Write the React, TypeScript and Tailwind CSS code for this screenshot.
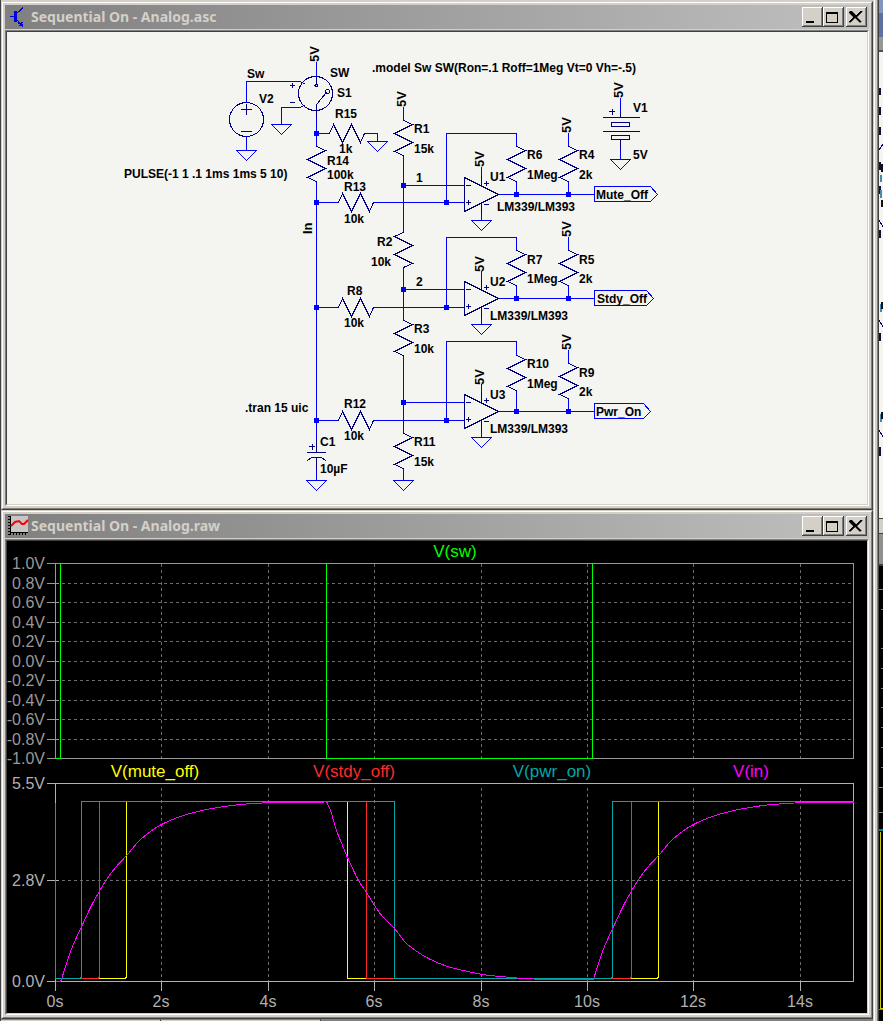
import type { ReactNode } from "react";

const SYMBOL = "#000080";
const WIRE = "#0000ff";

/* ---------- Window chrome ---------- */

function CaptionButton({ label, children }: { label: string; children: ReactNode }) {
  return (
    <button
      type="button"
      aria-label={label}
      className="h-5 w-[21px] bg-[#d4d0c8] shadow-[inset_-1px_-1px_#404040,inset_1px_1px_#ffffff,inset_-2px_-2px_#808080]"
    >
      <svg viewBox="0 0 21 20" className="block h-5 w-[21px]" shapeRendering="crispEdges">
        {children}
      </svg>
    </button>
  );
}

function Window({ title, icon, children }: { title: string; icon: ReactNode; children: ReactNode }) {
  return (
    <section className="border border-t-[#d4d0c8] border-r-[#404040] border-b-[#404040] border-l-[#d4d0c8] bg-[#d4d0c8]">
      <div className="border border-t-white border-r-[#808080] border-b-[#808080] border-l-white p-[2px]">
        <header className="mb-px flex h-6 items-center bg-linear-to-r from-[#808080] to-[#c0c0c0] pr-[2px] pl-[3px]">
          {icon}
          <h2 className="ml-[2px] flex-1 truncate font-['Noto_Sans',sans-serif] text-[14px] leading-6 font-bold text-[#d4d0c8]">
            {title}
          </h2>
          <CaptionButton label="Minimize">
            <path d="M4 14h8v2h-8z" />
          </CaptionButton>
          <CaptionButton label="Maximize">
            <path d="M3 5h12v11h-12zM4 7v8h10v-8z" fillRule="evenodd" />
          </CaptionButton>
          <div className="ml-[2px] flex">
            <CaptionButton label="Close">
              <path
                d="M4 4h2v1h1v1h1v1h1v1h2v-1h1v-1h1v-1h1v-1h2v1h-1v1h-1v1h-1v1h-1v1h-1v2h1v1h1v1h1v1h1v1h-2v-1h-1v-1h-1v-1h-1v-1h-2v1h-1v1h-1v1h-1v1h-2v-1h1v-1h1v-1h1v-1h1v-2h-1v-1h-1v-1h-1v-1h-1z"
                stroke="#000"
                strokeWidth="0.400"
              />
            </CaptionButton>
          </div>
        </header>
        <div className="border border-t-[#808080] border-r-white border-b-white border-l-[#808080]">
          <div className="border border-t-[#404040] border-r-[#d4d0c8] border-b-[#d4d0c8] border-l-[#404040]">
            {children}
          </div>
        </div>
      </div>
    </section>
  );
}

function SchematicIcon() {
  return (
    <svg viewBox="0 0 21 22" className="h-[22px] w-[21px]" shapeRendering="crispEdges" fill="none" stroke="#0000e0">
      <path d="M2 10.500h5" />
      <path d="M7.500 5v11" strokeWidth="3" />
      <path d="M9 7L15 1.500M9 14L15 20" strokeWidth="1.300" />
      <path d="M10 16l5 4M14 16l-2 4" strokeWidth="2" />
    </svg>
  );
}

function WaveformIcon() {
  return (
    <svg viewBox="0 0 21 22" className="h-[22px] w-[21px]" shapeRendering="crispEdges" fill="none">
      <path d="M3 1h17v16h-17z" fill="#c6c6c6" />
      <path d="M2.500 1v17M2 17.500h18" stroke="#000" />
      <path d="M1 1v19" stroke="#000" strokeWidth="2" strokeDasharray="1 2" />
      <path d="M2 19h18" stroke="#000" strokeWidth="2" strokeDasharray="1 2" />
      <path d="M3 11l4-4 4-1 3 3h2l4-4" stroke="#f00" strokeWidth="2" shapeRendering="auto" />
    </svg>
  );
}

/* ---------- Schematic ---------- */

type Point = [number, number];

const ZIGZAG: Point[] = [[0, 0], [4, 9], [13, -9], [22, 9], [31, -9], [35, 0]];

function Resistor({ x, y, horizontal, flip }: { x: number; y: number; horizontal?: boolean; flip?: boolean }) {
  const points = ZIGZAG.map(([along, across]) => {
    const side = flip ? -across : across;
    return horizontal ? `${x + along},${y - side}` : `${x + side},${y + along}`;
  }).join(" ");
  return <polyline points={points} stroke={SYMBOL} />;
}

function Ground({ x, y }: { x: number; y: number }) {
  return <path d={`M${x - 10} ${y}h20l-10 10z`} />;
}

function Junction({ x, y }: { x: number; y: number }) {
  return <rect x={x - 2.5} y={y - 2.5} width="5" height="5" fill={WIRE} stroke="none" />;
}

function Comparator({ y, ground }: { y: number; ground: number }) {
  return (
    <g>
      <g stroke={SYMBOL}>
        <path d={`M464 ${y - 17}v34l34 -17z`} />
        <path d={`M466 ${y - 9}h4M466 ${y + 8}h4M468 ${y + 6}v4`} />
        <path d={`M481 ${y - 20}v11M481 ${y + 9}v11`} />
        <path d={`M484 ${y - 11}h4M486 ${y - 13}v4M484 ${y + 10}h4`} />
      </g>
      <path d={`M481 ${y - 27}v7M481 ${y + 20}V${ground}`} />
      <Ground x={481} y={ground} />
    </g>
  );
}

function Flag({ y, bodyEnd }: { y: number; bodyEnd: number }) {
  return <path d={`M594 ${y - 8}H${bodyEnd}l7 8l-7 7H594z`} />;
}

const RESISTORS = [
  { x: 329, y: 133, horizontal: true },
  { x: 338, y: 202, horizontal: true },
  { x: 338, y: 307, horizontal: true },
  { x: 338, y: 420, horizontal: true },
  { x: 316, y: 146 },
  { x: 403, y: 120 },
  { x: 403, y: 232, flip: true },
  { x: 403, y: 320 },
  { x: 403, y: 433 },
  { x: 516, y: 146 },
  { x: 568, y: 146 },
  { x: 516, y: 250 },
  { x: 568, y: 250 },
  { x: 516, y: 355 },
  { x: 568, y: 363 },
];

const GROUNDS: Point[] = [[246, 150], [281, 124], [377, 141], [620, 159], [403, 480], [316, 480]];

const JUNCTIONS: Point[] = [
  [316, 133], [316, 202], [316, 307], [316, 420],
  [403, 185], [403, 289], [403, 402],
  [446, 202], [446, 307], [446, 420],
  [516, 194], [568, 194], [516, 298], [568, 298], [516, 411], [568, 411],
];

const WIRES = [
  "M246 102V81H300M246 136V150M281 124V107H300M316 62V76M316 118V146",
  "M316 133H329M364 133H377V141M316 181V438M316 202H338M373 202H464",
  "M316 307H338M373 307H464M316 420H338M373 420H464M316 470V480",
  "M403 107V120M403 155V232M403 267V320M403 355V433M403 468V480",
  "M403 185H464M403 289H464M403 402H464",
  "M446 202V133H516V146M516 181V194M568 133V146M568 181V194M498 194H594",
  "M446 307V237H516V250M516 285V298M568 237V250M568 285V298M498 298H594",
  "M446 420V341H516V355M516 390V411M568 350V363M568 398V411M498 411H594",
  "M620 98V110M620 149V159",
];

const LABELS: [number, number, string][] = [
  [247, 78, "Sw"], [330, 77, "SW"], [337, 97, "S1"], [259, 103, "V2"],
  [335, 118, "R15"], [339, 153, "1k"], [327, 165, "R14"], [327, 179, "100k"],
  [344, 191, "R13"], [344, 223, "10k"],
  [124, 178, "PULSE(-1 1 .1 1ms 1ms 5 10)"],
  [372, 72, ".model Sw SW(Ron=.1 Roff=1Meg Vt=0 Vh=-.5)"],
  [414, 133, "R1"], [414, 153, "15k"], [416, 182, "1"],
  [377, 246, "R2"], [371, 266, "10k"], [416, 286, "2"],
  [414, 333, "R3"], [414, 353, "10k"],
  [347, 295, "R8"], [344, 327, "10k"], [344, 408, "R12"], [344, 440, "10k"],
  [320, 446, "C1"], [320, 473, "10µF"], [414, 446, "R11"], [414, 466, "15k"],
  [245, 412, ".tran 15 uic"],
  [490, 181, "U1"], [497, 211, "LM339/LM393"], [527, 159, "R6"], [527, 179, "1Meg"],
  [579, 159, "R4"], [579, 179, "2k"], [596, 199, "Mute_Off"],
  [633, 112, "V1"], [633, 159, "5V"],
  [490, 286, "U2"], [490, 320, "LM339/LM393"], [527, 264, "R7"], [527, 283, "1Meg"],
  [579, 264, "R5"], [579, 283, "2k"], [597, 303, "Stdy_Off"],
  [490, 399, "U3"], [490, 433, "LM339/LM393"], [527, 368, "R10"], [527, 388, "1Meg"],
  [579, 377, "R9"], [579, 396, "2k"], [596, 416, "Pwr_On"],
];

const UPRIGHT_LABELS: [number, number, string][] = [
  [319, 62, "5V"], [406, 107, "5V"], [312, 234, "In"], [623, 98, "5V"],
  [484, 167, "5V"], [484, 272, "5V"], [484, 385, "5V"],
  [571, 133, "5V"], [571, 237, "5V"], [571, 350, "5V"],
];

function Schematic() {
  return (
    <svg
      viewBox="7 32 860 472"
      className="block h-auto w-full bg-[#f4f4f0] font-['Liberation_Sans',Arial,sans-serif] text-[12px] font-bold"
      role="img"
      aria-label="Sequential power-on circuit"
    >
      <g
        transform="translate(0.5 0.5)"
        fill="none"
        stroke={WIRE}
        strokeLinecap="square"
        shapeRendering="crispEdges"
      >
        <g stroke={SYMBOL}>
          <circle cx="246" cy="119" r="17" />
          <path d="M241 109h10M246 104v10M241 131h10" />
          <circle cx="315" cy="93" r="17" />
          <circle cx="316" cy="85" r="1.500" />
          <circle cx="327" cy="91" r="2" />
          <path d="M316 76V84M316 118V104L326 92M299 81l5 2M299 107l5 -2" />
          <path d="M290 85h4M292 83v4M290 102h4" />
          <path d="M603 117h36M603 131h36M611 122h18v4h-18zM611 135h18v4h-18zM620 109v8M620 139v11" />
          <path d="M609 111h5M612 109v5" />
          <path d="M316 438v14M316 457v14M307 452h18M307 460l4 -3h10l4 3" />
          <path d="M309 446h5M312 444v5" />
        </g>
        {WIRES.map((d) => (
          <path key={d} d={d} />
        ))}
        {RESISTORS.map((r) => (
          <Resistor key={`${r.x}-${r.y}`} {...r} />
        ))}
        {GROUNDS.map(([x, y]) => (
          <Ground key={`${x}-${y}`} x={x} y={y} />
        ))}
        <Comparator y={194} ground={220} />
        <Comparator y={298} ground={324} />
        <Comparator y={411} ground={437} />
        <Flag y={194} bodyEnd={650} />
        <Flag y={298} bodyEnd={646} />
        <Flag y={411} bodyEnd={643} />
        {JUNCTIONS.map(([x, y]) => (
          <Junction key={`${x}-${y}`} x={x} y={y} />
        ))}
      </g>
      {LABELS.map(([x, y, text]) => (
        <text key={`${x}-${y}`} x={x} y={y}>
          {text}
        </text>
      ))}
      {UPRIGHT_LABELS.map(([x, y, text]) => (
        <text key={`${x}-${y}`} transform={`translate(${x} ${y}) rotate(-90)`} className="text-[13px]">
          {text}
        </text>
      ))}
    </svg>
  );
}

/* ---------- Waveforms ---------- */

const SWITCH_ROWS = [563, 583, 602, 622, 641, 661, 680, 700, 719, 739, 758];
const SWITCH_LABELS = ["1.0V", "0.8V", "0.6V", "0.4V", "0.2V", "0.0V", "-0.2V", "-0.4V", "-0.6V", "-0.8V", "-1.0V"];
const TIME_COLUMNS = [55, 161, 268, 374, 481, 587, 693, 800];
const INNER_COLUMNS = TIME_COLUMNS.slice(1);

const CHARGE: Point[] = [
  [61, 979], [66, 963], [72, 946], [82, 924], [92, 903], [100, 889], [106, 879], [115, 867], [127, 854],
  [138, 841], [150, 831], [161, 824], [177, 817], [197, 811], [217, 807], [240, 804], [273, 802], [300, 802], [321, 802],
];
const DISCHARGE: Point[] = [
  [326, 801], [330, 810], [336, 830], [342, 845], [347, 857], [358, 880], [366, 892], [374, 905], [382, 916],
  [394, 928], [405, 942], [415, 950], [428, 958], [447, 966], [463, 970], [482, 974], [500, 976], [523, 978],
  [550, 979], [592, 979],
];
const RECHARGE: Point[] = CHARGE.map(([x, y]) => [x + 532, y]);

function smooth(points: Point[]) {
  let d = `${points[0][0]} ${points[0][1]}`;
  for (let i = 0; i < points.length - 1; i++) {
    const before = points[Math.max(i - 1, 0)];
    const from = points[i];
    const to = points[i + 1];
    const after = points[Math.min(i + 2, points.length - 1)];
    d += ` C${from[0] + (to[0] - before[0]) / 6} ${from[1] + (to[1] - before[1]) / 6}`;
    d += ` ${to[0] - (after[0] - from[0]) / 6} ${to[1] - (after[1] - from[1]) / 6} ${to[0]} ${to[1]}`;
  }
  return d;
}

const V_IN = `M55 981H60L${smooth(CHARGE)} L${smooth(DISCHARGE)} L${smooth(RECHARGE)}`;

function logicTrace(rise: number, fall: number, riseAgain: number) {
  return `M55 802V978H${rise - 1}L${rise} 976V801H${fall}V978H${riseAgain - 1}L${riseAgain} 976V801H853`;
}

const LEGENDS: [number, number, string, string][] = [
  [455, 557, "V(sw)", "#00ff00"],
  [155, 777, "V(mute_off)", "#ffff00"],
  [354, 777, "V(stdy_off)", "#ff2a2a"],
  [552, 777, "V(pwr_on)", "#00a8a8"],
  [751, 777, "V(in)", "#ff00ff"],
];

function Waveforms() {
  return (
    <svg
      viewBox="7 541 860 472"
      className="block h-auto w-full bg-black font-['Liberation_Sans',Arial,sans-serif] text-[16px]"
      role="img"
      aria-label="Simulation waveforms"
    >
      <g transform="translate(0.5 0.5)" fill="none" shapeRendering="crispEdges">
        <g stroke="#6c6c6c" strokeDasharray="3 3">
          {SWITCH_ROWS.slice(1, -1).map((y) => (
            <path key={y} d={`M55 ${y}H850`} />
          ))}
          {INNER_COLUMNS.map((x) => (
            <path key={x} d={`M${x} 563V758M${x} 787V981`} />
          ))}
          <path d="M55 880H850" />
        </g>
        <g stroke="#989898">
          <rect x="55" y="563" width="798" height="195" />
          {SWITCH_ROWS.map((y) => (
            <path key={y} d={`M46 ${y}H58`} />
          ))}
        </g>
        <g stroke="#b0b0b0">
          <rect x="55" y="783" width="798" height="198" />
          <path d="M46 783H55M46 880H58M46 981H55" />
          {TIME_COLUMNS.map((x) => (
            <path key={x} d={`M${x} 981V990`} />
          ))}
        </g>
        <path d="M55 661V758H60V563H326V758H592V563H853" stroke="#00ff00" />
        <path d={logicTrace(126, 347, 658)} stroke="#ffff00" />
        <path d={logicTrace(99, 366, 631)} stroke="#ff2a2a" />
        <path d={logicTrace(81, 394, 612)} stroke="#00a8a8" />
        <path d={V_IN} stroke="#ff00ff" />
      </g>
      <g fill="#989898" textAnchor="end">
        {SWITCH_ROWS.map((y, i) => (
          <text key={y} x="45" y={y + 6}>
            {SWITCH_LABELS[i]}
          </text>
        ))}
      </g>
      <g fill="#b0b0b0" textAnchor="end">
        <text x="45" y="789">5.5V</text>
        <text x="45" y="886">2.8V</text>
        <text x="45" y="987">0.0V</text>
      </g>
      <g fill="#b0b0b0" textAnchor="middle">
        {TIME_COLUMNS.map((x, i) => (
          <text key={x} x={x} y="1007">
            {`${i * 2}s`}
          </text>
        ))}
      </g>
      <g className="text-[17px]" textAnchor="middle">
        {LEGENDS.map(([x, y, text, color]) => (
          <text key={text} x={x} y={y} fill={color}>
            {text}
          </text>
        ))}
      </g>
    </svg>
  );
}

/* ---------- Edge of the neighbouring window ---------- */

function NeighbourSchematic() {
  return (
    <svg viewBox="0 0 4 466" className="block h-[466px] w-1 bg-[#f4f4f0]" shapeRendering="crispEdges" fill="none">
      <path d="M1 36v7M1 55v8M1 75v8M1 110v8M1 134v8M1 178v8M1 281v8M1 395v9" stroke="#101030" strokeWidth="2" />
      <path d="M2 123v7M2 138v8M2 252v8M2 362v8" stroke="#4a8ab0" strokeWidth="2" />
      <path d="M0 98l4-6M0 168l4 7M0 268l4 7M0 378l4 7" stroke={SYMBOL} />
      <path d="M3 112v8M3 148v7M3 250v7M3 360v7" stroke="#101010" strokeWidth="2" />
    </svg>
  );
}

function NeighbourWaveforms() {
  return (
    <svg viewBox="0 0 4 453" className="block h-[453px] w-1" shapeRendering="crispEdges" fill="none">
      <path
        d="M0 23h4M2 43h2M2 82h2M2 102h2M2 122h2M2 141h2M2 161h2M2 181h2M2 201h2M0 221h4M0 246h4M0 443h4"
        stroke="#808080"
      />
      <path d="M0 264h4" stroke="#008080" strokeWidth="2" />
      <path d="M1 266v176h3" stroke="#c8c800" />
    </svg>
  );
}

export default function App() {
  return (
    <div className="flex min-h-screen bg-[#d4d0c8]">
      <main className="flex min-w-0 flex-1 flex-col border-l border-l-[#404040] pt-px">
        <Window title="Sequential On - Analog.asc" icon={<SchematicIcon />}>
          <Schematic />
        </Window>
        <Window title="Sequential On - Analog.raw" icon={<WaveformIcon />}>
          <Waveforms />
        </Window>
        <footer className="flex min-h-[2px] flex-1 bg-[#808080]">
          <div className="w-40 border-t border-r border-t-[#808080] border-r-[#404040] bg-[#d4d0c8]" />
          <div className="w-40 border-t border-r border-t-[#808080] border-r-[#404040] bg-[#d4d0c8]" />
        </footer>
      </main>
      <aside className="flex w-[10px] shrink-0 border-l border-l-[#d4d0c8]">
        <div className="w-1 border-l border-l-white bg-[#d4d0c8]">
          <div className="h-full border-r border-r-[#808080]" />
        </div>
        <div className="flex min-w-0 flex-1 flex-col border-l border-l-[#404040] bg-black">
          <div className="h-[13px] bg-[#8296bc]" />
          <div className="h-6 bg-[#5c70a4]" />
          <div className="h-[13px] bg-[#989898]" />
          <div className="h-[2px] bg-[#505050]" />
          <NeighbourSchematic />
          <div className="h-4 border-y border-y-[#404040] bg-[#d4d0c8]" />
          <div className="h-8 border-b-2 border-b-[#404040] bg-[#909090]" />
          <NeighbourWaveforms />
        </div>
      </aside>
    </div>
  );
}
